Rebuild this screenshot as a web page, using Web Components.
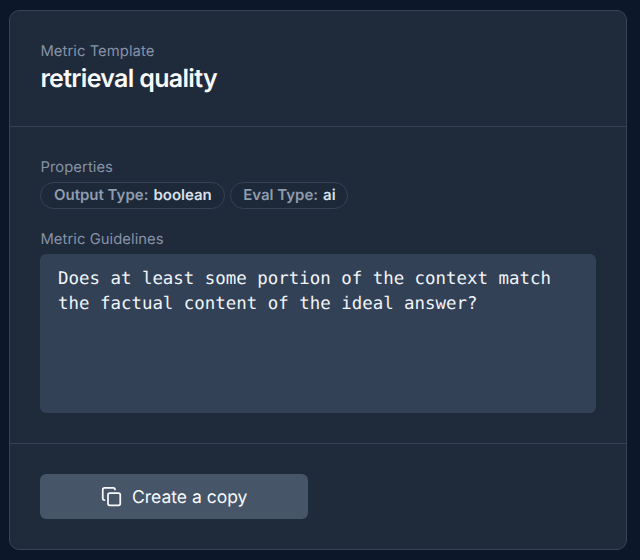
<!DOCTYPE html>
<html lang="en">
<head>
<meta charset="utf-8">
<title>Metric Template</title>
<style>
  html, body { height: 100%; }
  body {
    margin: 0;
    box-sizing: border-box;
    padding: 10px 13px 10px 9px;
    background: #0c1729;
    color: #f1f5f9;
    font-family: Inter, "Liberation Sans", sans-serif;
    text-rendering: geometricPrecision;
    overflow: hidden;
  }
</style>
</head>
<body>
<metric-card>
  <labeled-field slot="header" label="Metric Template" style="--label-gap:1px">
    <metric-title>retrieval quality</metric-title>
  </labeled-field>
  <labeled-field label="Properties">
    <property-list>
      <property-pill name="Output Type:" style="width:185px">boolean</property-pill>
      <property-pill name="Eval Type:" style="width:118px">ai</property-pill>
    </property-list>
  </labeled-field>
  <labeled-field label="Metric Guidelines">
    <guideline-box>Does at least some portion of the context match the factual content of the ideal answer?</guideline-box>
  </labeled-field>
  <copy-button slot="footer">Create a copy</copy-button>
</metric-card>
<script>
  const define = (name, html) => customElements.define(name, class extends HTMLElement {
    constructor() {
      super();
      this.attachShadow({ mode: "open" }).innerHTML = html;
    }
    connectedCallback() {
      for (const el of this.shadowRoot.querySelectorAll("[data-attr]"))
        el.textContent = this.getAttribute(el.dataset.attr) || "";
    }
  });

  define("metric-card", `
    <style>
      :host { display: grid; grid-template-rows: 115px 317px 1fr; box-sizing: border-box; height: 540px;
        border: 1px solid #364456; border-radius: 10px; background: #1f2a3b; overflow: hidden; }
      header, main, footer { box-sizing: border-box; padding: 30px 30px 0 30.4px; }
      main, footer { border-top: 1px solid #364456; }
      main { display: flex; flex-direction: column; gap: 20px; }
    </style>
    <header><slot name="header"></slot></header>
    <main><slot></slot></main>
    <footer><slot name="footer"></slot></footer>`);

  define("labeled-field", `
    <style>
      :host { display: flex; flex-direction: column; gap: var(--label-gap, 5px); }
      .label { font-size: 14.8px; line-height: 20px; letter-spacing: .06px; color: #8592a6; }
      :host(:not([slot])) .label { height: 19.5px; }
    </style>
    <div class="label" data-attr="label"></div>
    <slot></slot>`);

  define("metric-title", `
    <style>
      :host { display: block; font-size: 25px; line-height: 34px; font-weight: 600; letter-spacing: -.68px; color: #f8fafc; }
    </style>
    <slot></slot>`);

  define("property-list", `
    <style>:host { display: flex; gap: 5px; }</style>
    <slot></slot>`);

  define("property-pill", `
    <style>
      :host { display: flex; align-items: center; justify-content: center; gap: 5px; box-sizing: border-box;
        height: 27.5px; border: 1px solid #364456; border-radius: 14px; background: #1d2838;
        font-size: 15px; line-height: 20px; font-weight: 600; color: #d9e1ec; white-space: nowrap; }
      .name { color: #8f9cae; }
    </style>
    <span class="name" data-attr="name"></span><span><slot></slot></span>`);

  define("guideline-box", `
    <style>
      :host { display: block; box-sizing: border-box; width: 555.5px; height: 159px; padding: 13px 17px 0 17.6px;
        border-radius: 6px; background: #334156; color: #f1f5f9;
        font: 17.43px/25px "DejaVu Sans Mono", monospace; }
    </style>
    <slot></slot>`);

  define("copy-button", `
    <style>
      :host { display: flex; align-items: center; justify-content: center; gap: 10px; box-sizing: border-box;
        width: 267.6px; height: 45px; border-radius: 6px; background: #475569; color: #f8fafc;
        font-size: 17.5px; line-height: 25px; }
      svg { display: block; width: 21px; height: 21px; }
      .text { padding-top: 1px; }
    </style>
    <svg viewBox="0 0 24 24" fill="none" stroke="currentColor" stroke-width="2" stroke-linecap="round" stroke-linejoin="round">
      <rect x="8" y="8" width="14" height="14" rx="2"/>
      <path d="M4 16c-1.1 0-2-.9-2-2V4c0-1.1.9-2 2-2h10c1.1 0 2 .9 2 2"/>
    </svg>
    <span class="text"><slot></slot></span>`);
</script>
</body>
</html>
